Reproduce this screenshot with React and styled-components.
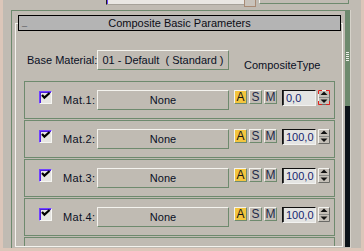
import React from 'react';
import styled, { createGlobalStyle } from 'styled-components';

const GREEN = '#6e8a6e';
const LIGHT = '#f4f3ee';

const GlobalStyle = createGlobalStyle`
  html, body {
    margin: 0;
    padding: 0;
    background: #dcc6b9;
  }
  body {
    font-family: 'Liberation Sans', Arial, sans-serif;
    font-size: 11px;
    color: #0a0f24;
  }
`;

const Screen = styled.div`
  width: 364px;
  height: 251px;
  background: #dcc6b9;
  overflow: hidden;
`;

const Desk = styled.div`
  margin-left: 3px;
  width: 358px;
  height: 248px;
  background: #c0bbb3;
  display: flex;
  flex-direction: column;
`;

const TopStrip = styled.div`
  height: 10px;
  display: flex;
  align-items: flex-start;
`;

const PrevField = styled.div`
  margin-left: 103px;
  width: 138px;
  height: 5px;
  box-sizing: border-box;
  border-left: 1px solid #1c1c1c;
  border-bottom: 1px solid #a6a29a;
  box-shadow: inset 1px 0 0 #6a3cff;
  background: #e9e7e3;
`;

const PrevButton = styled.div`
  width: 12px;
  height: 7px;
  box-sizing: border-box;
  border: 1px solid #a88a74;
  border-top: none;
  background: #c9c3bb;
`;

const PrevGroup = styled.div`
  margin-left: 3px;
  width: 90px;
  height: 4px;
  box-sizing: border-box;
  border-left: 1px solid ${LIGHT};
  border-right: 1px solid ${GREEN};
  border-bottom: 1px solid ${GREEN};
`;

const Main = styled.div`
  display: flex;
  height: 238px;
`;

const Rollout = styled.div`
  margin-left: 8px;
  width: 334px;
  box-sizing: border-box;
  border-top: 1px solid ${GREEN};
  border-left: 1px solid ${GREEN};
  padding-top: 4px;
  display: flex;
  flex-direction: column;
`;

const Header = styled.div`
  position: relative;
  z-index: 1;
  margin-left: 6px;
  width: 323px;
  height: 16px;
  box-sizing: border-box;
  border: 1px solid #000;
  background: #b4b4b4;
  display: grid;
  grid-template-columns: 1fr auto 1fr;
  line-height: 14px;
  color: #0c0c14;
`;

const Collapse = styled.span`
  padding-left: 3px;
  font-size: 9px;
  font-weight: bold;
`;

const Panel = styled.div`
  margin: -8px 0 0 3px;
  width: 328px;
  height: 224px;
  box-sizing: border-box;
  border: 1px solid ${LIGHT};
  padding: 26px 7px 0 8px;
  overflow: hidden;
`;

const BaseRow = styled.div`
  display: flex;
  align-items: flex-start;
  height: 20px;
`;

const BaseLabel = styled.span`
  width: 73px;
  padding-left: 3px;
  box-sizing: border-box;
  line-height: 20px;
  white-space: nowrap;
`;

const MapButton = styled.div`
  width: 132px;
  height: 20px;
  box-sizing: border-box;
  border: 1px solid;
  border-color: ${LIGHT} ${GREEN} ${GREEN} ${LIGHT};
  line-height: 18px;
  text-align: center;
  white-space: pre;
`;

const TypeLabel = styled.span`
  margin: 9px 0 0 15px;
  line-height: 13px;
`;

const RowList = styled.div`
  margin-top: 11px;
  display: flex;
  flex-direction: column;
  gap: 1px;
`;

const MatRow = styled.div`
  flex-shrink: 0;
  height: 38px;
  box-sizing: border-box;
  border: 1px solid ${GREEN};
  padding-top: 8px;
  display: flex;
  align-items: flex-start;
`;

const CheckBox = styled.span`
  margin: 1px 0 0 14px;
  width: 13px;
  height: 13px;
  box-sizing: border-box;
  border: 1px solid;
  border-color: #7142ff #f6f6f2 #f6f6f2 #7142ff;
  box-shadow: inset 1px 1px 0 #4b1fdc;
  background: #e6e5e2;
  svg {
    display: block;
  }
`;

const MatLabel = styled.span`
  margin-left: 11px;
  width: 34px;
  line-height: 20px;
  white-space: nowrap;
  letter-spacing: 0.3px;
`;

const Toggle = styled.span`
  margin-left: ${(p) => (p.$first ? 5 : 2)}px;
  width: 13px;
  height: 14px;
  box-sizing: border-box;
  border: 1px solid;
  border-color: ${LIGHT} ${GREEN} ${GREEN} ${LIGHT};
  background: ${(p) => (p.$on ? '#f3c53e' : 'transparent')};
  color: ${(p) => (p.$on ? '#141414' : '#232a48')};
  font-size: 12px;
  line-height: 12px;
  text-align: center;
`;

const ValueField = styled.span`
  margin-left: 5px;
  width: 34px;
  height: 16px;
  box-sizing: border-box;
  border: 1px solid;
  border-color: #101010 #f2f2f0 #f2f2f0 #101010;
  box-shadow: inset 1px 0 0 #3a3a3a;
  background: #e4e4e2;
  padding-left: 3px;
  line-height: 14px;
  color: #141e6e;
`;

const SpinBox = styled.span`
  margin-left: 2px;
  display: flex;
  svg {
    display: block;
  }
`;

const Scrollbar = styled.div`
  width: 5px;
  height: 237px;
  display: flex;
  flex-direction: column;
`;

const Track = styled.div`
  height: 96px;
  background: ${GREEN};
  padding-top: 42px;
  box-sizing: border-box;
`;

const Grip = styled.div`
  margin-left: 1px;
  width: 3px;
  height: 9px;
  background: repeating-linear-gradient(to bottom, #eef0ea 0 1px, transparent 1px 2px);
`;

const Thumb = styled.div`
  flex: 1;
  background: #0c1318;
`;

const Gutter = styled.div`
  width: 11px;
  box-sizing: border-box;
  border-left: 1px solid #d6d2ca;
`;

const Tick = () => (
  <svg width="11" height="11" viewBox="0 0 11 11">
    <polyline points="2,3 4.4,5.6 9.6,1" fill="none" stroke="#000" strokeWidth="2.2" />
  </svg>
);

const Spinner = ({ focused }) => (
  <SpinBox>
    <svg width="12" height="15" viewBox="0 0 12 15">
      <rect width="12" height="15" fill="#c4bfb7" />
      <path d="M0.5 14.5V0.5H11.5" fill="none" stroke="#f4f4f0" />
      <path d="M0.5 14.5H11.5V0.5" fill="none" stroke="#6a6a66" />
      <path d="M1 7.5H11" stroke="#8c8c88" />
      <path d="M6 1.5L9.5 5H2.5Z" fill="#111" />
      <path d="M2.5 9.5H9.5L6 13Z" fill="#111" />
      {focused && (
        <path
          d="M0.5 4V0.5H4M8 0.5H11.5V4M11.5 11V14.5H8M4 14.5H0.5V11"
          fill="none"
          stroke="#e4201c"
        />
      )}
    </svg>
  </SpinBox>
);

const mats = [
  { id: 1, value: '0,0', focused: true },
  { id: 2, value: '100,0' },
  { id: 3, value: '100,0' },
  { id: 4, value: '100,0' },
];

export default function App() {
  return (
    <Screen>
      <GlobalStyle />
      <Desk>
        <TopStrip>
          <PrevField />
          <PrevButton />
          <PrevGroup />
        </TopStrip>
        <Main>
          <Rollout>
            <Header>
              <Collapse>_</Collapse>
              <span>Composite Basic Parameters</span>
              <span />
            </Header>
            <Panel>
              <BaseRow>
                <BaseLabel>Base Material:</BaseLabel>
                <MapButton>{'01 - Default  ( Standard )'}</MapButton>
                <TypeLabel>CompositeType</TypeLabel>
              </BaseRow>
              <RowList>
                {mats.map((m) => (
                  <MatRow key={m.id}>
                    <CheckBox>
                      <Tick />
                    </CheckBox>
                    <MatLabel>Mat.{m.id}:</MatLabel>
                    <MapButton>None</MapButton>
                    <Toggle $first $on>A</Toggle>
                    <Toggle>S</Toggle>
                    <Toggle>M</Toggle>
                    <ValueField>{m.value}</ValueField>
                    <Spinner focused={m.focused} />
                  </MatRow>
                ))}
                {/* next slot, scrolled below the visible area */}
                <MatRow />
              </RowList>
            </Panel>
          </Rollout>
          <Scrollbar>
            <Track>
              <Grip />
            </Track>
            <Thumb />
          </Scrollbar>
          <Gutter />
        </Main>
      </Desk>
    </Screen>
  );
}
